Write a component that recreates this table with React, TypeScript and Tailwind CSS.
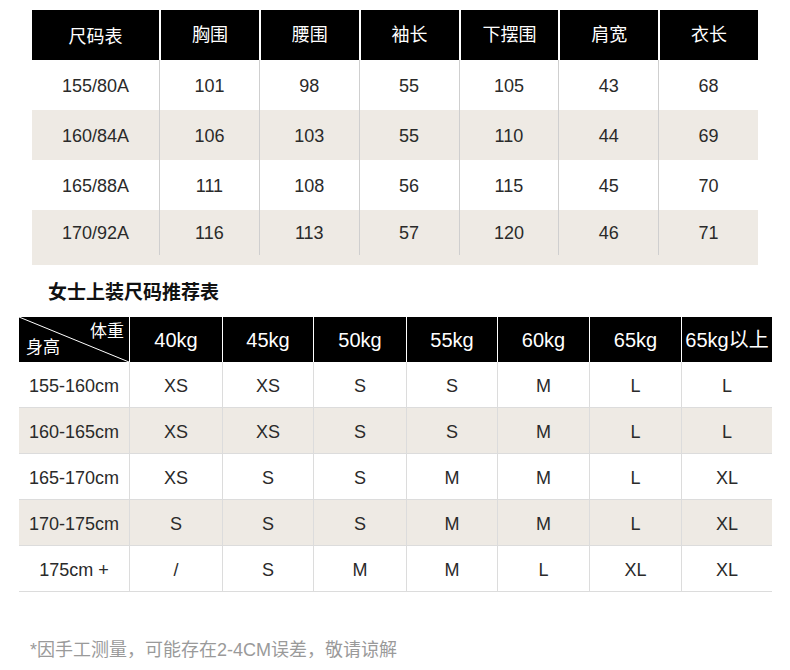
const sizeHead = ["胸围", "腰围", "袖长", "下摆围", "肩宽", "衣长"];

const sizeRows = [
  ["155/80A", "101", "98", "55", "105", "43", "68"],
  ["160/84A", "106", "103", "55", "110", "44", "69"],
  ["165/88A", "111", "108", "56", "115", "45", "70"],
  ["170/92A", "116", "113", "57", "120", "46", "71"],
];

const weights = ["40kg", "45kg", "50kg", "55kg", "60kg", "65kg", "65kg以上"];

const recRows = [
  ["155-160cm", "XS", "XS", "S", "S", "M", "L", "L"],
  ["160-165cm", "XS", "XS", "S", "S", "M", "L", "L"],
  ["165-170cm", "XS", "S", "S", "M", "M", "L", "XL"],
  ["170-175cm", "S", "S", "S", "M", "M", "L", "XL"],
  ["175cm +", "/", "S", "M", "M", "L", "XL", "XL"],
];

const font = {
  fontFamily: '"Liberation Sans", "Noto Sans CJK SC", sans-serif',
};

export default function App() {
  return (
    <div className="h-[670px] w-[790px] bg-white text-[#2a2a2a]" style={font}>
      {/* 尺码表 */}
      <div className="ml-[32px] w-[726px] pt-[10px]">
        <div className="grid h-[50px] grid-cols-[127px_repeat(6,1fr)] bg-black text-[18px] text-white">
          <div className="flex items-center justify-center pt-[5px]">尺码表</div>
          {sizeHead.map((h) => (
            <div key={h} className="flex items-center justify-center border-l-2 border-white">
              {h}
            </div>
          ))}
        </div>

        {sizeRows.map((row, i) => (
          <div key={row[0]} className={i % 2 === 1 ? "bg-[#eeeae4]" : "bg-white"}>
            <div
              className={
                "grid grid-cols-[127px_repeat(6,1fr)] text-[18px] " +
                (i === 3 ? "h-[45px]" : "h-[50px]")
              }
            >
              {row.map((c, j) => (
                <div
                  key={j}
                  className={
                    "flex items-center justify-center pt-[2px] " +
                    (j > 0 ? "border-l border-[#cfcfcf]" : "")
                  }
                >
                  {c}
                </div>
              ))}
            </div>
            {i === 3 && <div className="h-[10px]" />}
          </div>
        ))}
      </div>

      <div className="flex h-[52px] items-center pl-[48px] pt-[5px] text-[19px] font-semibold text-[#111]">
        女士上装尺码推荐表
      </div>

      {/* 推荐表 */}
      <div className="ml-[19px] w-[753px]">
        <div className="grid h-[45px] grid-cols-[110px_93px_91px_93px_91px_92px_92px_1fr] bg-black text-[20px] text-white">
          <div className="relative">
            <svg className="absolute inset-0" width="110" height="45" viewBox="0 0 110 45">
              <line x1="0" y1="0" x2="110" y2="45" stroke="white" strokeWidth="1" />
            </svg>
            <span className="absolute right-[5px] top-[6px] text-[17px] leading-none">体重</span>
            <span className="absolute bottom-[6px] left-[7px] text-[17px] leading-none">身高</span>
          </div>
          {weights.map((w) => (
            <div key={w} className="flex items-center justify-center whitespace-nowrap border-l border-white">
              {w}
            </div>
          ))}
        </div>

        {recRows.map((row, i) => (
          <div
            key={row[0]}
            className={
              "grid h-[46px] grid-cols-[110px_93px_91px_93px_91px_92px_92px_1fr] border-b border-[#dcdcdc] text-[18px] " +
              (i % 2 === 1 ? "bg-[#eeeae4]" : "bg-white")
            }
          >
            {row.map((c, j) => (
              <div
                key={j}
                className={
                  "flex items-center justify-center whitespace-nowrap pt-[4px] " +
                  (j > 0 ? "border-l border-[#dcdcdc]" : "")
                }
              >
                {c}
              </div>
            ))}
          </div>
        ))}
      </div>

      <div className="pl-[30px] pt-[45px] text-[18px] text-[#9a9a9a]">
        *因手工测量，可能存在2-4CM误差，敬请谅解
      </div>
    </div>
  );
}
